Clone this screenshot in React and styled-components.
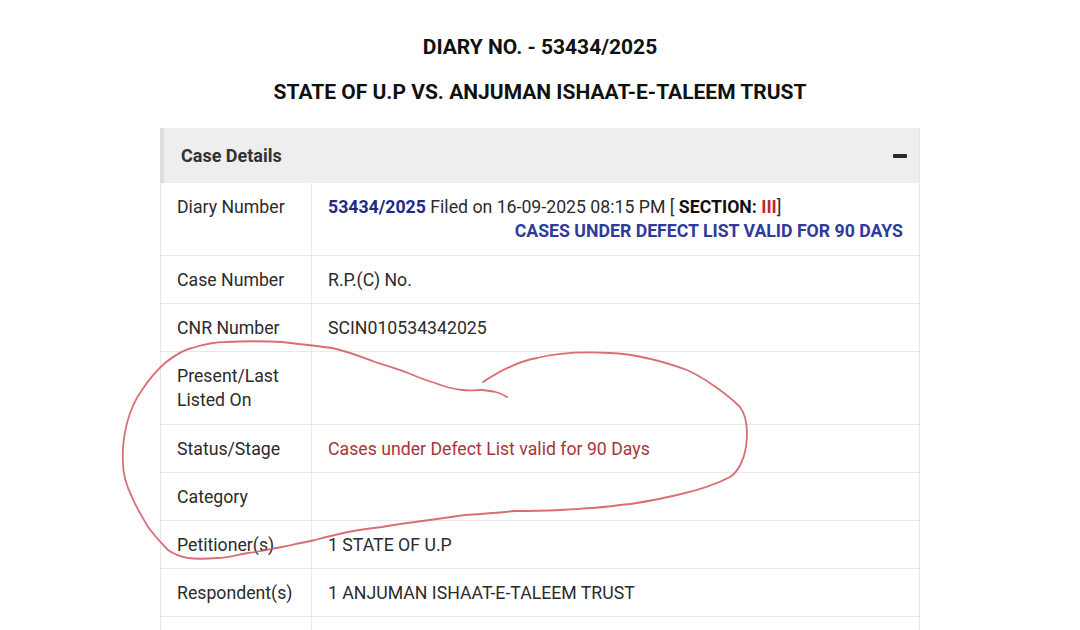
import React from "react";
import styled, { createGlobalStyle } from "styled-components";

const GlobalStyle = createGlobalStyle`
  html, body {
    margin: 0;
    padding: 0;
    background: #fff;
    font-family: Roboto, "Liberation Sans", Arial, sans-serif;
    color: #333;
  }
`;

const rows = [
  { label: "Case Number", value: "R.P.(C) No." },
  { label: "CNR Number", value: "SCIN010534342025" },
  { label: "Present/Last\nListed On", value: "", tall: true },
  {
    label: "Status/Stage",
    value: "Cases under Defect List valid for 90 Days",
    tone: "red",
  },
  { label: "Category", value: "" },
  { label: "Petitioner(s)", value: "1 STATE OF U.P" },
  { label: "Respondent(s)", value: "1 ANJUMAN ISHAAT-E-TALEEM TRUST" },
  { label: "Petitioner Advocate(s)", value: "" },
];

function App() {
  return (
    <Page>
      <GlobalStyle />
      <Heading>
        <DiaryTitle>DIARY NO. - 53434/2025</DiaryTitle>
        <CaseTitle>STATE OF U.P VS. ANJUMAN ISHAAT-E-TALEEM TRUST</CaseTitle>
      </Heading>

      <Panel>
        <PanelHeader>
          <span>Case Details</span>
          <Minus />
        </PanelHeader>
        <Table>
          <Row $tall>
            <Label>Diary Number</Label>
            <Value>
              <div>
                <DiaryNo>53434/2025</DiaryNo> Filed on 16-09-2025 08:15 PM [{" "}
                <strong>SECTION:</strong> <Section>III</Section>]
              </div>
              <Notice>CASES UNDER DEFECT LIST VALID FOR 90 DAYS</Notice>
            </Value>
          </Row>
          {rows.map((r) => (
            <Row key={r.label} $tall={r.tall}>
              <Label>{r.label}</Label>
              <Value $tone={r.tone}>{r.value}</Value>
            </Row>
          ))}
        </Table>
      </Panel>

      <Scribble viewBox="0 0 1080 630">
        <path d="M483,382 C495,374 515,362 537,358 C560,352 590,352 610,353 C635,354 665,362 687,370 C705,378 728,395 740,407 C748,418 748,432 746,447 C744,460 738,472 730,477 C715,485 695,491 677,495 C655,500 635,504 620,505 C600,508 580,509 560,510 C540,511 525,511 515,511 C495,513 480,514 465,515 C445,518 430,520 415,522 C400,524 392,525 382,527 C365,529 358,530 348,532 C330,536 322,538 315,540 C300,543 292,545 282,547 C270,549 258,552 248,553 C235,555 228,558 218,558 C205,559 195,559 188,558 C178,556 172,553 168,550 C160,542 154,535 148,527 C140,513 135,505 132,497 C126,485 123,475 123,463 C122,448 124,435 127,423 C131,408 136,398 142,390 C150,378 157,370 165,363 C175,355 183,350 192,348 C205,344 215,342 225,342 C245,341 265,341 282,342 C300,344 318,346 332,348 C350,352 362,357 375,362 C388,366 398,369 408,373 C420,378 428,381 435,383 C445,387 453,389 462,390 C470,391 477,390 482,390 C492,391 500,392 507,397" />
      </Scribble>
    </Page>
  );
}

const Page = styled.main`
  position: relative;
  width: 1080px;
  height: 630px;
  overflow: hidden;
  background: #fff;
`;

const Heading = styled.header`
  display: flex;
  flex-direction: column;
  align-items: center;
  padding-top: 34px;
  gap: 19px;
  color: #111;
`;

const DiaryTitle = styled.h2`
  margin: 0;
  font-size: 21px;
  line-height: 26px;
  font-weight: 700;
`;

const CaseTitle = styled.h1`
  margin: 0;
  font-size: 21px;
  line-height: 26px;
  font-weight: 700;
`;

const Panel = styled.section`
  width: 759px;
  margin: 23px 0 0 160px;
  border-right: 1px solid #e6e6e6;
`;

const PanelHeader = styled.div`
  height: 55px;
  background: #eeeeee;
  border-left: 4px solid #dedede;
  display: flex;
  align-items: center;
  justify-content: space-between;
  padding: 0 12px 0 17px;
  font-size: 18px;
  font-weight: 700;
  color: #333;
`;

const Minus = styled.span`
  width: 14px;
  height: 4px;
  border-radius: 1px;
  background: #2a2a2a;
`;

const Table = styled.div`
  display: flex;
  flex-direction: column;
  border-left: 1px solid #e6e6e6;
`;

const Row = styled.div`
  display: grid;
  grid-template-columns: 151px 1fr;
  border-bottom: 1px solid #e8e8e8;
  font-size: 17.7px;
  line-height: 24px;

  & > div {
    padding-bottom: ${(p) => (p.$tall ? "12px" : "11px")};
  }
`;

const Label = styled.div`
  padding: 12px 8px 11px 16px;
  border-right: 1px solid #e8e8e8;
  white-space: pre-line;
  color: #2b2b2b;
`;

const Value = styled.div`
  padding: 12px 16px 11px 16px;
  color: ${(p) => (p.$tone === "red" ? "#a8353a" : "#2b2b2b")};

  strong {
    font-weight: 700;
    color: #111;
  }
`;

const DiaryNo = styled.strong`
  && {
    color: #232a86;
  }
`;

const Section = styled.strong`
  && {
    color: #c0262c;
  }
`;

const Notice = styled.div`
  text-align: right;
  font-weight: 700;
  color: #2f3a9c;
`;

const Scribble = styled.svg`
  position: absolute;
  inset: 0;
  width: 1080px;
  height: 630px;
  pointer-events: none;

  path {
    fill: none;
    stroke: #d2555a;
    stroke-width: 1.8;
    stroke-linecap: round;
    stroke-linejoin: round;
    opacity: 0.85;
  }
`;

export default App;
